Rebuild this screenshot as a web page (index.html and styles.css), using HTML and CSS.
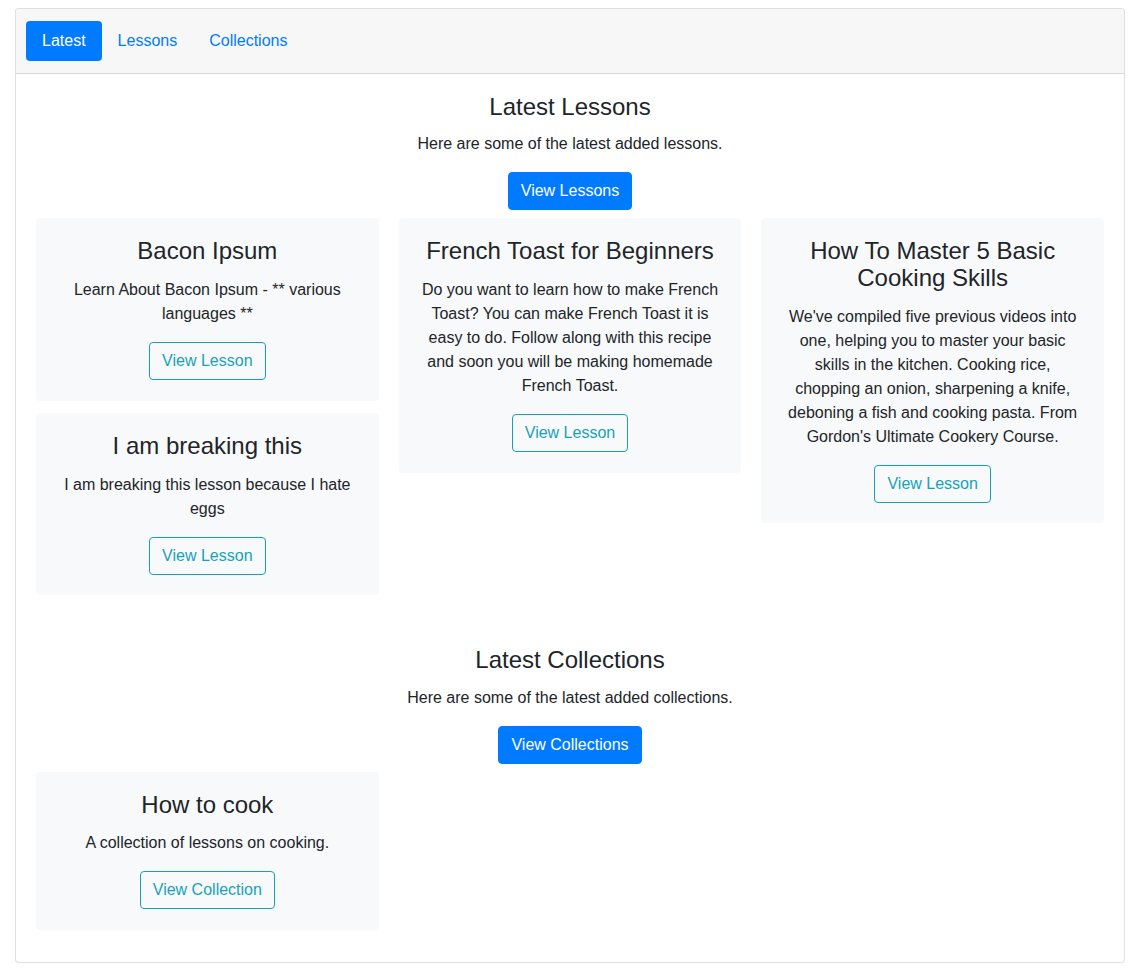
FILE: index.html
```html
<!DOCTYPE html>
<html lang="en">
<head>
<meta charset="utf-8">
<title>Latest</title>
<link rel="stylesheet" href="styles.css">
</head>
<body>
<div class="page">
  <div class="card">
    <div class="card-header">
      <ul class="pills">
        <li><a class="pill active" href="#">Latest</a></li>
        <li><a class="pill" href="#">Lessons</a></li>
        <li><a class="pill" href="#">Collections</a></li>
      </ul>
    </div>
    <div class="card-body">
      <section class="section">
        <h4 class="section-title">Latest Lessons</h4>
        <p class="section-text">Here are some of the latest added lessons.</p>
        <a class="btn btn-primary" href="#">View Lessons</a>
        <div class="columns">
          <div class="col">
            <div class="item">
              <h4 class="item-title">Bacon Ipsum</h4>
              <p class="item-text">Learn About Bacon Ipsum - ** various languages **</p>
              <a class="btn btn-outline" href="#">View Lesson</a>
            </div>
            <div class="item">
              <h4 class="item-title">I am breaking this</h4>
              <p class="item-text">I am breaking this lesson because I hate eggs</p>
              <a class="btn btn-outline" href="#">View Lesson</a>
            </div>
          </div>
          <div class="col">
            <div class="item">
              <h4 class="item-title">French Toast for Beginners</h4>
              <p class="item-text">Do you want to learn how to make French Toast? You can make French Toast it is easy to do. Follow along with this recipe and soon you will be making homemade French Toast.</p>
              <a class="btn btn-outline" href="#">View Lesson</a>
            </div>
          </div>
          <div class="col">
            <div class="item">
              <h4 class="item-title">How To Master 5 Basic Cooking Skills</h4>
              <p class="item-text">We've compiled five previous videos into one, helping you to master your basic skills in the kitchen. Cooking rice, chopping an onion, sharpening a knife, deboning a fish and cooking pasta. From Gordon's Ultimate Cookery Course.</p>
              <a class="btn btn-outline" href="#">View Lesson</a>
            </div>
          </div>
        </div>
      </section>
      <section class="section section-second">
        <h4 class="section-title">Latest Collections</h4>
        <p class="section-text">Here are some of the latest added collections.</p>
        <a class="btn btn-primary" href="#">View Collections</a>
        <div class="columns">
          <div class="col">
            <div class="item">
              <h4 class="item-title">How to cook</h4>
              <p class="item-text">A collection of lessons on cooking.</p>
              <a class="btn btn-outline" href="#">View Collection</a>
            </div>
          </div>
          <div class="col"></div>
          <div class="col"></div>
        </div>
      </section>
    </div>
  </div>
</div>
</body>
</html>
```

FILE: styles.css
```css
* { box-sizing: border-box; }

html, body {
  margin: 0;
  padding: 0;
  background: #fff;
}

body {
  font-family: "Liberation Sans", Arial, sans-serif;
  font-size: 16px;
  line-height: 1.5;
  color: #212529;
}

.page {
  padding: 8px 15px;
}

.card {
  border: 1px solid rgba(0, 0, 0, 0.125);
  border-radius: 4px;
  background: #fff;
}

.card-header {
  background: #f7f7f7;
  border-bottom: 1px solid rgba(0, 0, 0, 0.125);
  border-radius: 3px 3px 0 0;
  padding: 12px 10px;
}

.pills {
  list-style: none;
  margin: 0;
  padding: 0;
  display: flex;
}

.pill {
  display: block;
  padding: 8px 16px;
  color: #007bff;
  text-decoration: none;
  border-radius: 4px;
  line-height: 24px;
}

.pill.active {
  background: #007bff;
  color: #fff;
}

.card-body {
  padding: 20px;
}

.section {
  text-align: center;
}

.section-second {
  margin-top: 40px;
}

.section-title {
  font-size: 24px;
  font-weight: 500;
  line-height: 1.1;
  margin: 0 0 12px;
}

.section-text {
  margin: 0 0 16px;
}

.btn {
  display: inline-block;
  vertical-align: top;
  padding: 6px 12px;
  border: 1px solid transparent;
  border-radius: 4px;
  font-size: 16px;
  line-height: 24px;
  text-decoration: none;
}

.btn-primary {
  background: #007bff;
  border-color: #007bff;
  color: #fff;
}

.btn-outline {
  color: #17a2b8;
  border-color: #17a2b8;
  background: transparent;
}

.columns {
  display: grid;
  grid-template-columns: repeat(3, 1fr);
  column-gap: 20px;
  margin-top: 8px;
  align-items: start;
}

.col {
  display: flex;
  flex-direction: column;
}

.item {
  background: #f8f9fa;
  border-radius: 4px;
  padding: 20px 20px 20.5px;
  margin-bottom: 12px;
  text-align: center;
}

.item-title {
  font-size: 24px;
  font-weight: 500;
  line-height: 1.1;
  margin: 0 0 13.5px;
}

.item-text {
  margin: 0 0 16px;
}
```
